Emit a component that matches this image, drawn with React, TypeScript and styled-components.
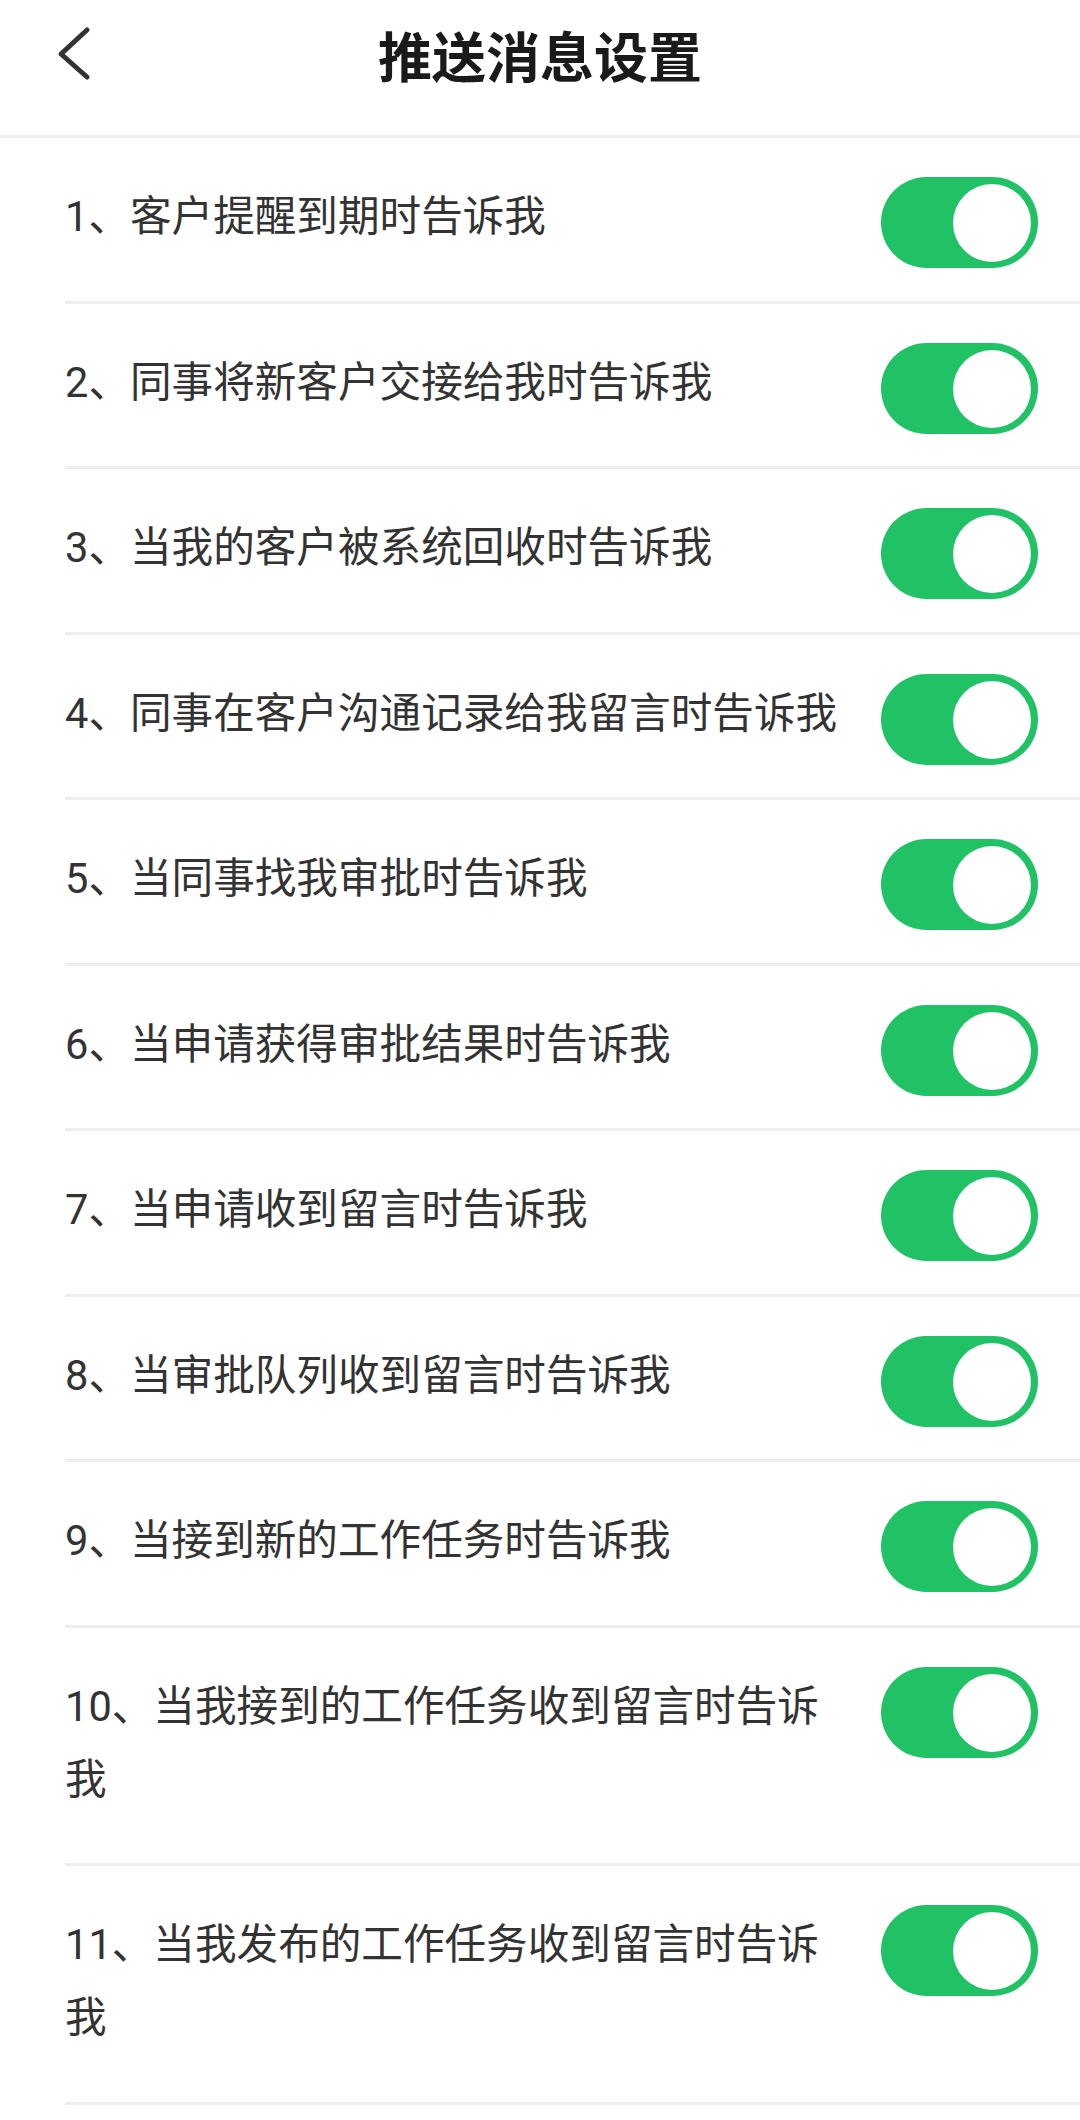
import React, { useState } from "react";
import styled, { createGlobalStyle } from "styled-components";

const GlobalStyle = createGlobalStyle`
  html, body {
    margin: 0;
    padding: 0;
    background: #ffffff;
  }
  body {
    font-family: "Noto Sans CJK SC", "Noto Sans", sans-serif;
    color: #333333;
  }
  * { box-sizing: border-box; }
`;

const Page = styled.div`
  width: 1080px;
  min-height: 2120px;
  background: #ffffff;
`;

const Header = styled.header`
  display: grid;
  grid-template-columns: 1fr auto 1fr;
  align-items: start;
  height: 138px;
  border-bottom: 3px solid #eeeeee;
`;

const BackButton = styled.button`
  justify-self: start;
  margin: 22px 0 0 52px;
  padding: 0;
  border: none;
  background: transparent;
  width: 44px;
  height: 64px;
  cursor: pointer;
  display: flex;
`;

const Title = styled.h1`
  margin: 24px 0 0;
  font-size: 54px;
  line-height: 62px;
  font-weight: 700;
  color: #1a1a1a;
  letter-spacing: 0;
`;

const List = styled.ul`
  list-style: none;
  margin: 0;
  padding: 0;
`;

const Row = styled.li`
  display: flex;
  align-items: flex-start;
  gap: 26px;
  margin-left: 65px;
  padding: 42px 42px 47.5px 0;
  border-bottom: 3px solid #eeeeee;
`;

const Label = styled.span`
  flex: 1;
  min-width: 0;
  font-family: Roboto, "Noto Sans CJK SC", sans-serif;
  font-size: 41.6px;
  line-height: 73px;
  color: #333333;
  word-break: break-all;
`;

const Switch = styled.button<{ $on: boolean }>`
  flex: none;
  position: relative;
  width: 157px;
  height: 91px;
  margin: -3px 0 -15px;
  padding: 0;
  border: none;
  border-radius: 46px;
  background: ${(p) => (p.$on ? "#20c265" : "#dcdcdc")};
  cursor: pointer;
  transition: background 0.2s;
`;

const Knob = styled.span<{ $on: boolean }>`
  position: absolute;
  top: 7px;
  left: ${(p) => (p.$on ? "72px" : "7px")};
  width: 78px;
  height: 78px;
  border-radius: 50%;
  background: #ffffff;
  transition: left 0.2s;
`;

const items = [
  "1、客户提醒到期时告诉我",
  "2、同事将新客户交接给我时告诉我",
  "3、当我的客户被系统回收时告诉我",
  "4、同事在客户沟通记录给我留言时告诉我",
  "5、当同事找我审批时告诉我",
  "6、当申请获得审批结果时告诉我",
  "7、当申请收到留言时告诉我",
  "8、当审批队列收到留言时告诉我",
  "9、当接到新的工作任务时告诉我",
  "10、当我接到的工作任务收到留言时告诉我",
  "11、当我发布的工作任务收到留言时告诉我",
];

export default function App() {
  const [state, setState] = useState<boolean[]>(items.map(() => true));
  const toggle = (i: number) =>
    setState((s) => s.map((v, j) => (j === i ? !v : v)));

  return (
    <Page>
      <GlobalStyle />
      <Header>
        <BackButton aria-label="返回">
          <svg width="44" height="64" viewBox="0 0 44 64" fill="none">
            <path
              d="M35 8 L9 32 L35 55"
              stroke="#333333"
              strokeWidth="5"
              strokeLinecap="round"
              strokeLinejoin="round"
            />
          </svg>
        </BackButton>
        <Title>推送消息设置</Title>
        <span />
      </Header>
      <List>
        {items.map((t, i) => (
          <Row key={i}>
            <Label>{t}</Label>
            <Switch $on={state[i]} onClick={() => toggle(i)} aria-pressed={state[i]}>
              <Knob $on={state[i]} />
            </Switch>
          </Row>
        ))}
      </List>
    </Page>
  );
}
